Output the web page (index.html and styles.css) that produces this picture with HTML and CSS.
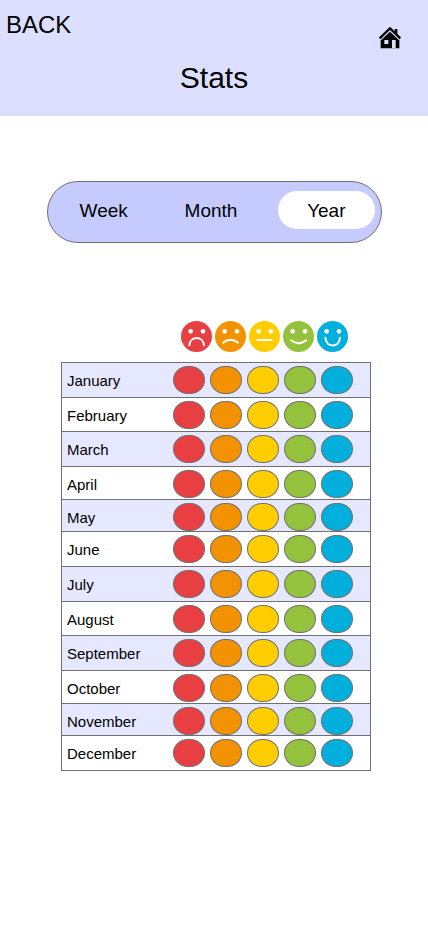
FILE: index.html
```html
<!DOCTYPE html>
<html lang="en">
<head>
<meta charset="utf-8">
<meta name="viewport" content="width=device-width, initial-scale=1">
<title>Stats</title>
<link rel="stylesheet" href="styles.css">
</head>
<body>
<header class="header">
  <nav class="nav">
    <a class="back" href="#">BACK</a>
    <a class="home" href="#" aria-label="Home">
      <svg class="home-icon" viewBox="0 0 72 66" aria-hidden="true">
        <path d="M50 22V6h8v24z"/>
        <path d="M8 36 36 9l28 27v28H8z"/>
        <path class="eave" d="M7 38 36 11l29 27"/>
        <path class="roof" d="M5 34 36 4l31 30"/>
        <path class="opening" d="M19 39h12v12H19zM42 39h11v25H42z"/>
      </svg>
    </a>
  </nav>
  <h1 class="title">Stats</h1>
</header>

<main>
  <div class="tabs">
    <button class="tab" type="button">Week</button>
    <button class="tab" type="button">Month</button>
    <button class="tab active" type="button" aria-pressed="true">Year</button>
  </div>

  <section class="stats">
    <div class="faces">
      <svg class="face red" viewBox="0 0 93 93" role="img" aria-label="Very sad"><circle class="skin" cx="46.5" cy="46.5" r="46.5"/><circle class="eye" cx="29" cy="31" r="7"/><circle class="eye" cx="66" cy="31" r="7"/><path class="mouth" d="M25 73C27 44 67 44 69 73"/></svg>
      <svg class="face orange" viewBox="0 0 93 93" role="img" aria-label="Sad"><circle class="skin" cx="46.5" cy="46.5" r="46.5"/><circle class="eye" cx="29" cy="31" r="7"/><circle class="eye" cx="66" cy="31" r="7"/><path class="mouth" d="M24 65Q46 48 69 65"/></svg>
      <svg class="face yellow" viewBox="0 0 93 93" role="img" aria-label="Neutral"><circle class="skin" cx="46.5" cy="46.5" r="46.5"/><circle class="eye" cx="29" cy="31" r="7"/><circle class="eye" cx="66" cy="31" r="7"/><path class="mouth" d="M25 57H68"/></svg>
      <svg class="face green" viewBox="0 0 93 93" role="img" aria-label="Happy"><circle class="skin" cx="46.5" cy="46.5" r="46.5"/><circle class="eye" cx="29" cy="31" r="7"/><circle class="eye" cx="66" cy="31" r="7"/><path class="mouth" d="M24 58Q46 75 69 58"/></svg>
      <svg class="face blue" viewBox="0 0 93 93" role="img" aria-label="Very happy"><circle class="skin" cx="46.5" cy="46.5" r="46.5"/><circle class="eye" cx="29" cy="31" r="7"/><circle class="eye" cx="66" cy="31" r="7"/><path class="mouth" d="M25 50C27 81 67 81 69 50"/></svg>
    </div>

    <table class="months">
      <tbody>
        <tr><th scope="row">January</th><td><span class="dot red"></span></td><td><span class="dot orange"></span></td><td><span class="dot yellow"></span></td><td><span class="dot green"></span></td><td><span class="dot blue"></span></td></tr>
        <tr><th scope="row">February</th><td><span class="dot red"></span></td><td><span class="dot orange"></span></td><td><span class="dot yellow"></span></td><td><span class="dot green"></span></td><td><span class="dot blue"></span></td></tr>
        <tr><th scope="row">March</th><td><span class="dot red"></span></td><td><span class="dot orange"></span></td><td><span class="dot yellow"></span></td><td><span class="dot green"></span></td><td><span class="dot blue"></span></td></tr>
        <tr><th scope="row">April</th><td><span class="dot red"></span></td><td><span class="dot orange"></span></td><td><span class="dot yellow"></span></td><td><span class="dot green"></span></td><td><span class="dot blue"></span></td></tr>
        <tr><th scope="row">May</th><td><span class="dot red"></span></td><td><span class="dot orange"></span></td><td><span class="dot yellow"></span></td><td><span class="dot green"></span></td><td><span class="dot blue"></span></td></tr>
        <tr><th scope="row">June</th><td><span class="dot red"></span></td><td><span class="dot orange"></span></td><td><span class="dot yellow"></span></td><td><span class="dot green"></span></td><td><span class="dot blue"></span></td></tr>
        <tr><th scope="row">July</th><td><span class="dot red"></span></td><td><span class="dot orange"></span></td><td><span class="dot yellow"></span></td><td><span class="dot green"></span></td><td><span class="dot blue"></span></td></tr>
        <tr><th scope="row">August</th><td><span class="dot red"></span></td><td><span class="dot orange"></span></td><td><span class="dot yellow"></span></td><td><span class="dot green"></span></td><td><span class="dot blue"></span></td></tr>
        <tr><th scope="row">September</th><td><span class="dot red"></span></td><td><span class="dot orange"></span></td><td><span class="dot yellow"></span></td><td><span class="dot green"></span></td><td><span class="dot blue"></span></td></tr>
        <tr><th scope="row">October</th><td><span class="dot red"></span></td><td><span class="dot orange"></span></td><td><span class="dot yellow"></span></td><td><span class="dot green"></span></td><td><span class="dot blue"></span></td></tr>
        <tr><th scope="row">November</th><td><span class="dot red"></span></td><td><span class="dot orange"></span></td><td><span class="dot yellow"></span></td><td><span class="dot green"></span></td><td><span class="dot blue"></span></td></tr>
        <tr><th scope="row">December</th><td><span class="dot red"></span></td><td><span class="dot orange"></span></td><td><span class="dot yellow"></span></td><td><span class="dot green"></span></td><td><span class="dot blue"></span></td></tr>
      </tbody>
    </table>
  </section>
</main>
</body>
</html>
```

FILE: styles.css
```css
* {
  box-sizing: border-box;
}

body {
  margin: 0;
  background: #fff;
  color: #000;
  font-family: "Liberation Sans", Helvetica, Arial, sans-serif;
}

.red { --mood: #e83f43; }
.orange { --mood: #f39200; }
.yellow { --mood: #ffcd00; }
.green { --mood: #95c23d; }
.blue { --mood: #00afdc; }

/* Header */
.header {
  padding: 11px 0 21px;
  background: #dcdfff;
}

.nav {
  display: flex;
  justify-content: space-between;
  align-items: flex-start;
  padding: 0 26px 0 6px;
}

.back {
  color: inherit;
  font-size: 24px;
  line-height: 28px;
  text-decoration: none;
}

.home {
  padding-top: 16px;
}

.home-icon {
  display: block;
  width: 24px;
  height: 22px;
}

.roof,
.eave {
  fill: none;
  stroke: #000;
  stroke-width: 7;
}

.eave {
  stroke: #dcdfff;
  stroke-width: 5;
}

.opening {
  fill: #dcdfff;
}

.title {
  margin: 12px 0 0;
  font-size: 30px;
  font-weight: 400;
  line-height: 34px;
  text-align: center;
}

/* Period switch */
.tabs {
  display: flex;
  gap: 10px;
  margin: 65px 46px 0 47px;
  padding: 9px 6px 13px 7px;
  border: 1px solid #707070;
  border-radius: 31px;
  background: #c5cbff;
}

.tab {
  flex: 1;
  height: 38px;
  padding: 2px 0 0;
  border: 0;
  border-radius: 19px;
  background: transparent;
  color: inherit;
  font-family: inherit;
  font-size: 19px;
}

.tab.active {
  margin-left: 8px;
  background: #fff;
}

/* Monthly moods */
.stats {
  margin: 78px 57px 0 61px;
}

.faces {
  display: flex;
  justify-content: flex-end;
  gap: 3px;
  padding-right: 23px;
}

.face {
  width: 31px;
  height: 31px;
}

.skin {
  fill: var(--mood);
}

.eye {
  fill: #fff;
}

.mouth {
  fill: none;
  stroke: #fff;
  stroke-width: 6;
  stroke-linecap: round;
}

.months {
  width: 100%;
  margin-top: 10px;
  border: 1px solid #707070;
  border-bottom: 0;
  border-spacing: 0;
  table-layout: fixed;
}

.months tr {
  height: 35px;
}

.months tr:nth-child(6n + 2) {
  height: 34px;
}

.months tr:nth-child(6n + 4) {
  height: 33px;
}

.months tr:nth-child(6n + 5) {
  height: 32px;
}

.months tr:nth-child(odd) {
  background: #e6e8ff;
}

.months th,
.months td {
  border-bottom: 1px solid #707070;
  vertical-align: top;
}

.months th {
  padding: 9px 0 0 5px;
  font-size: 15px;
  font-weight: 400;
  line-height: 18px;
  text-align: left;
}

.months td {
  width: 37px;
  padding: 3px 0 0;
}

.months td:last-child {
  width: 49px;
}

.dot {
  display: block;
  width: 32px;
  height: 28px;
  border: 1px solid #707070;
  border-radius: 15px / 14px;
  background: var(--mood);
}
```
